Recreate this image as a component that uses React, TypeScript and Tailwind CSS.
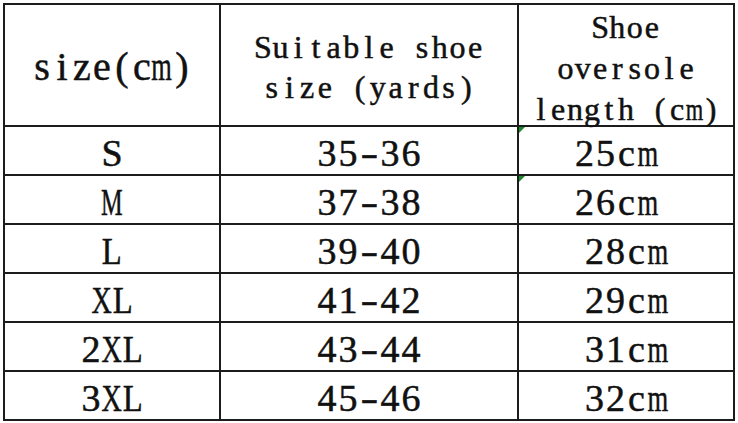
import React from "react";

type SqueezeMap = Record<string, string>;

function Mono({
  text,
  cell,
  squeeze = {},
}: {
  text: string;
  cell: string;
  squeeze?: SqueezeMap;
}) {
  return (
    <span className="inline-flex whitespace-nowrap">
      {text.split("").map((ch, i) => (
        <span key={i} className={`inline-flex justify-center shrink-0 ${cell}`}>
          <span className={`inline-block shrink-0 ${squeeze[ch] ?? ""}`}>
            {ch === " " ? "\u00a0" : ch}
          </span>
        </span>
      ))}
    </span>
  );
}

const headBig: SqueezeMap = { m: "scale-x-[0.66]" };
const headSmall: SqueezeMap = { m: "scale-x-[0.7]" };
const body: SqueezeMap = {
  m: "scale-x-[0.7]",
  M: "scale-x-[0.64]",
  X: "scale-x-[0.74]",
  L: "scale-x-[0.86]",
  "-": "scale-x-[1.4]",
};

const rows = [
  { s: "S", y: "35-36", l: "25cm", shift: true, tick: true },
  { s: "M", y: "37-38", l: "26cm", shift: true, tick: true },
  { s: "L", y: "39-40", l: "28cm", shift: false, tick: false },
  { s: "XL", y: "41-42", l: "29cm", shift: false, tick: false },
  { s: "2XL", y: "43-44", l: "31cm", shift: false, tick: false },
  { s: "3XL", y: "45-46", l: "32cm", shift: false, tick: false },
];

export default function App() {
  return (
    <div className="w-[738px] h-[423px] bg-white pt-[3px] pl-[3px]">
      <div
        className="w-[732px] h-[418px] border-2 border-[#1c1c1c] grid grid-cols-[216px_298px_214px] text-[#111] [-webkit-text-stroke:0.5px_#111]"
        style={{ fontFamily: '"Liberation Serif", "Times New Roman", serif' }}
      >
        <div className="h-[122px] border-r-2 border-b-2 border-[#1c1c1c] flex items-center justify-center text-[40px] leading-none pt-[4px]">
          <Mono text="size(cm)" cell="w-[20px]" squeeze={headBig} />
        </div>
        <div className="h-[122px] border-r-2 border-b-2 border-[#1c1c1c] flex flex-col items-center justify-center text-[32px] leading-[40px] pt-[4px]">
          <Mono text="Suitable shoe" cell="w-[17.7px]" squeeze={headSmall} />
          <Mono text="size (yards)" cell="w-[17.7px]" squeeze={headSmall} />
        </div>
        <div className="h-[122px] border-b-2 border-[#1c1c1c] flex flex-col items-center justify-center text-[32px] leading-[41px] pt-[6px]">
          <Mono text="Shoe" cell="w-[17.3px]" squeeze={headSmall} />
          <Mono text="oversole" cell="w-[17.3px]" squeeze={headSmall} />
          <Mono text="length (cm)" cell="w-[17px]" squeeze={headSmall} />
        </div>
        {rows.map((r, i) => {
          const last = i === rows.length - 1;
          const h = last ? "h-[47px]" : "h-[49px] border-b-2";
          return (
            <React.Fragment key={r.s}>
              <div className={`${h} border-r-2 border-[#1c1c1c] flex items-center justify-center text-[38px] leading-none pt-[5px]`}>
                <Mono text={r.s} cell="w-[21px]" squeeze={body} />
              </div>
              <div className={`${h} border-r-2 border-[#1c1c1c] flex items-center justify-center text-[38px] leading-none pt-[5px]`}>
                <Mono text={r.y} cell="w-[21px]" squeeze={body} />
              </div>
              <div className={`${h} relative border-[#1c1c1c] flex items-center justify-center text-[38px] leading-none pt-[5px]`}>
                {r.tick && (
                  <div className="absolute left-0 top-0 w-0 h-0 border-t-[6px] border-t-[#1e8a2e] border-r-[6px] border-r-transparent" />
                )}
                <span className={r.shift ? "mr-[20px]" : ""}>
                  <Mono text={r.l} cell="w-[21px]" squeeze={body} />
                </span>
              </div>
            </React.Fragment>
          );
        })}
      </div>
    </div>
  );
}
